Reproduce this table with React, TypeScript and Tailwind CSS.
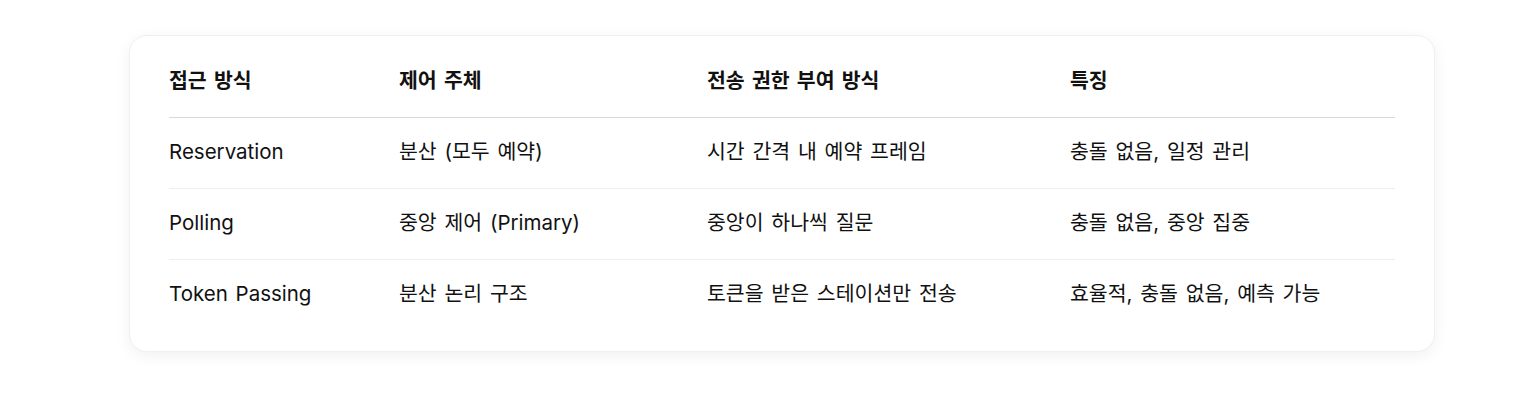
import React from "react";

const rows = [
  ["Reservation", "분산 (모두 예약)", "시간 간격 내 예약 프레임", "충돌 없음, 일정 관리"],
  ["Polling", "중앙 제어 (Primary)", "중앙이 하나씩 질문", "충돌 없음, 중앙 집중"],
  ["Token Passing", "분산 논리 구조", "토큰을 받은 스테이션만 전송", "효율적, 충돌 없음, 예측 가능"],
];

export default function App() {
  return (
    <div
      className="w-[1522px] h-[410px] bg-white pt-[35px] pl-[129px]"
      style={{ fontFamily: 'Inter, "Noto Sans CJK KR", sans-serif' }}
    >
      <div className="w-[1306px] rounded-[18px] border border-[#f0f0f0] bg-white px-[39px] pt-[11px] pb-[21px] shadow-[0_4px_16px_rgba(0,0,0,0.06)]">
        <table className="w-full border-collapse text-[20.5px] text-[#111] [word-spacing:2px]">
          <colgroup>
            <col className="w-[230px]" />
            <col className="w-[308px]" />
            <col className="w-[363px]" />
            <col />
          </colgroup>
          <thead>
            <tr className="h-[70px] border-b border-[#d9d9d9]">
              {["접근 방식", "제어 주체", "전송 권한 부여 방식", "특징"].map((h) => (
                <th key={h} className="text-left font-semibold p-0">{h}</th>
              ))}
            </tr>
          </thead>
          <tbody>
            {rows.map((r, i) => (
              <tr key={i} className={`h-[71px] ${i < rows.length - 1 ? "border-b border-[#efefef]" : ""}`}>
                {r.map((c, j) => (
                  <td key={j} className="p-0 text-left">{c}</td>
                ))}
              </tr>
            ))}
          </tbody>
        </table>
      </div>
    </div>
  );
}
